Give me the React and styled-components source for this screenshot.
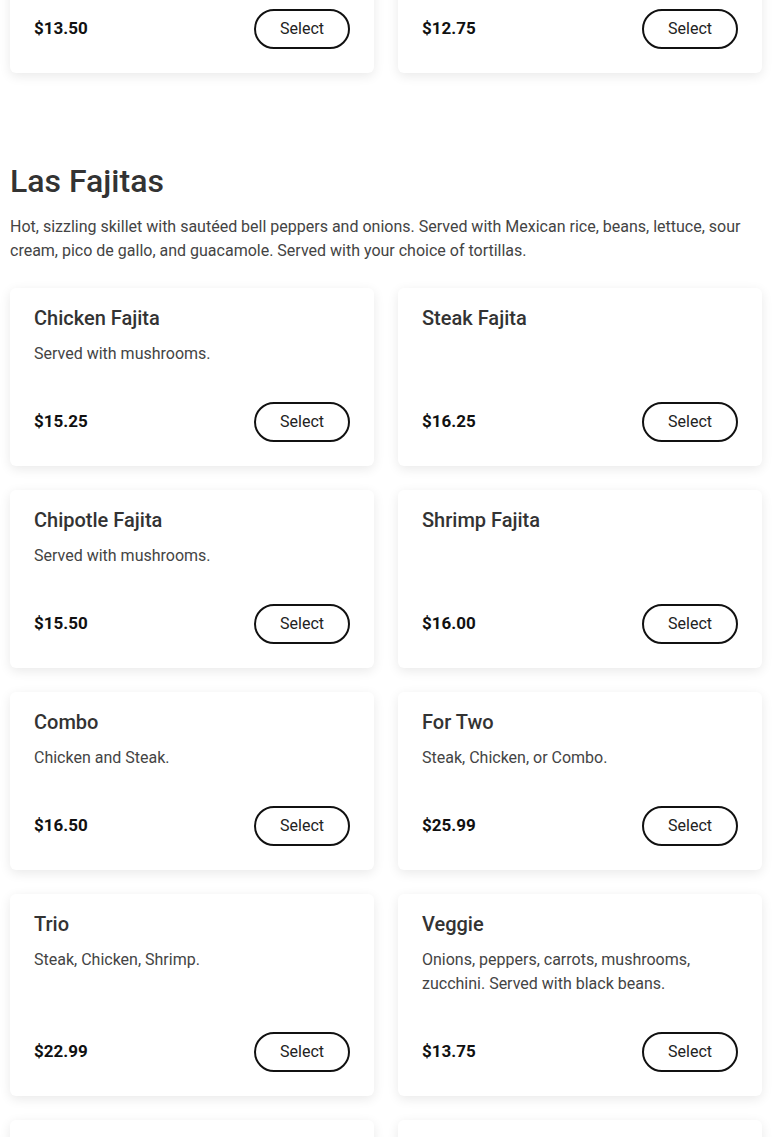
import React from 'react';
import styled, { createGlobalStyle } from 'styled-components';

const GlobalStyle = createGlobalStyle`
  html, body {
    margin: 0;
    padding: 0;
    background: #ffffff;
    font-family: Roboto, "Liberation Sans", Arial, sans-serif;
    color: #333333;
  }
  * { box-sizing: border-box; }
`;

// page is shown scrolled: the top of the previous section sits above the fold
const Page = styled.main`
  padding: 0 10px;
  margin-top: -45px;
`;

const Section = styled.section`
  & + & {
    margin-top: 89px;
  }
`;

const SectionTitle = styled.h2`
  margin: 0 0 15px;
  font-size: 32px;
  line-height: 38px;
  font-weight: 500;
  color: #333333;
`;

const SectionText = styled.p`
  margin: 0 0 25px;
  font-size: 16px;
  line-height: 24px;
  color: #444444;
`;

const Grid = styled.div`
  display: grid;
  grid-template-columns: 1fr 1fr;
  gap: 24px;
`;

const Card = styled.article`
  display: flex;
  flex-direction: column;
  padding: 18px 24px 24px;
  background: #ffffff;
  border-radius: 6px;
  box-shadow: 0 3px 12px rgba(0, 0, 0, 0.09);
`;

const ItemName = styled.h3`
  margin: 0 0 12px;
  font-size: 20px;
  line-height: 24px;
  font-weight: 500;
  color: #333333;
`;

const ItemText = styled.p`
  margin: 0;
  font-size: 16px;
  line-height: 24px;
  color: #444444;
`;

const Footer = styled.div`
  display: flex;
  align-items: center;
  justify-content: space-between;
  margin-top: auto;
  padding-top: 36px;
`;

const Price = styled.span`
  padding-bottom: 2px;
  font-size: 17px;
  font-weight: 700;
  color: #111111;
`;

const SelectButton = styled.button`
  padding: 8px 24px;
  font-family: inherit;
  font-size: 16px;
  line-height: 20px;
  color: #222222;
  background: #ffffff;
  border: 2px solid #111111;
  border-radius: 20px;
  cursor: pointer;
`;

const previous = [
  { price: '$13.50' },
  { price: '$12.75' },
];

const fajitas = [
  { name: 'Chicken Fajita', text: 'Served with mushrooms.', price: '$15.25' },
  { name: 'Steak Fajita', price: '$16.25' },
  { name: 'Chipotle Fajita', text: 'Served with mushrooms.', price: '$15.50' },
  { name: 'Shrimp Fajita', price: '$16.00' },
  { name: 'Combo', text: 'Chicken and Steak.', price: '$16.50' },
  { name: 'For Two', text: 'Steak, Chicken, or Combo.', price: '$25.99' },
  { name: 'Trio', text: 'Steak, Chicken, Shrimp.', price: '$22.99' },
  { name: 'Veggie', text: 'Onions, peppers, carrots, mushrooms, zucchini. Served with black beans.', price: '$13.75' },
  { name: 'Steak and Shrimp Fajita', text: 'Served with mushrooms.', price: '$17.50' },
  { name: 'Carnitas Fajita', text: 'Served with pineapple.', price: '$15.75' },
];

const MenuItem = ({ item }) => (
  <Card>
    {item.name && <ItemName>{item.name}</ItemName>}
    {item.text && <ItemText>{item.text}</ItemText>}
    <Footer>
      <Price>{item.price}</Price>
      <SelectButton type="button">Select</SelectButton>
    </Footer>
  </Card>
);

const App = () => (
  <>
    <GlobalStyle />
    <Page>
      <Section>
        <Grid>
          {previous.map((item) => <MenuItem key={item.price} item={item} />)}
        </Grid>
      </Section>
      <Section>
        <SectionTitle>Las Fajitas</SectionTitle>
        <SectionText>
          Hot, sizzling skillet with sautéed bell peppers and onions. Served with Mexican rice, beans,
          lettuce, sour cream, pico de gallo, and guacamole. Served with your choice of tortillas.
        </SectionText>
        <Grid>
          {fajitas.map((item, i) => <MenuItem key={i} item={item} />)}
        </Grid>
      </Section>
    </Page>
  </>
);

export default App;
